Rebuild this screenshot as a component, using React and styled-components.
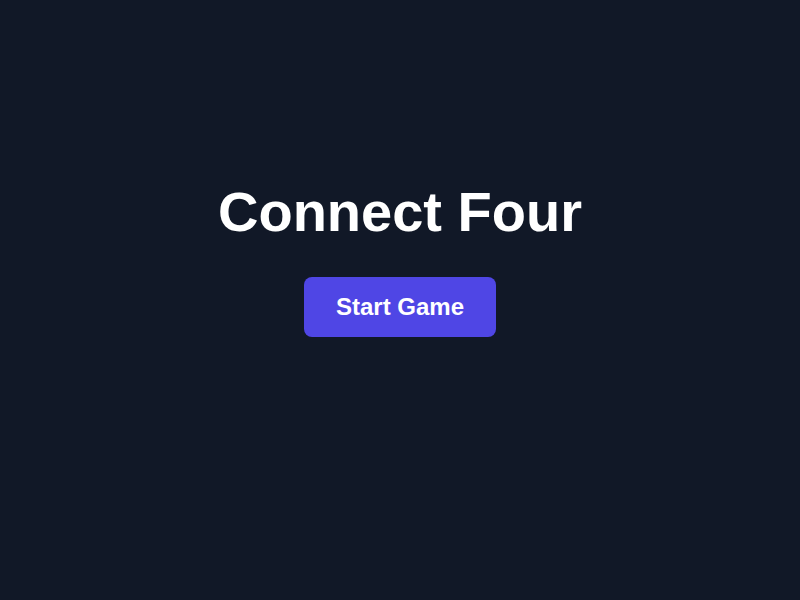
import styled, { createGlobalStyle } from "styled-components";

const GlobalStyle = createGlobalStyle`
    html, body {
        margin: 0;
        padding: 0;
        background-color: #111827;
    }
    body {
        font-family: "Liberation Sans", Arial, sans-serif;
    }
`;

const Page = styled.div`
    min-height: 100vh;
    box-sizing: border-box;
    padding-top: 180px;
    display: flex;
    flex-direction: column;
    align-items: center;
    background-color: #111827;
`;

const Title = styled.h1`
    margin: 0 0 33px 0;
    font-size: 56px;
    font-weight: 700;
    line-height: 64px;
    color: #fff;
`;

const StartButton = styled.button`
    font-family: inherit;
    font-size: 24px;
    font-weight: 700;
    line-height: 32px;
    color: #fff;
    background-color: #4f46e5;
    border: none;
    border-radius: 8px;
    padding: 14px 32px;
    cursor: pointer;
    &:hover {
        background-color: #4338ca;
    }
`;

function App() {
    return (
        <>
            <GlobalStyle />
            <Page>
                <Title>Connect Four</Title>
                <StartButton>Start Game</StartButton>
            </Page>
        </>
    )
}

export default App
